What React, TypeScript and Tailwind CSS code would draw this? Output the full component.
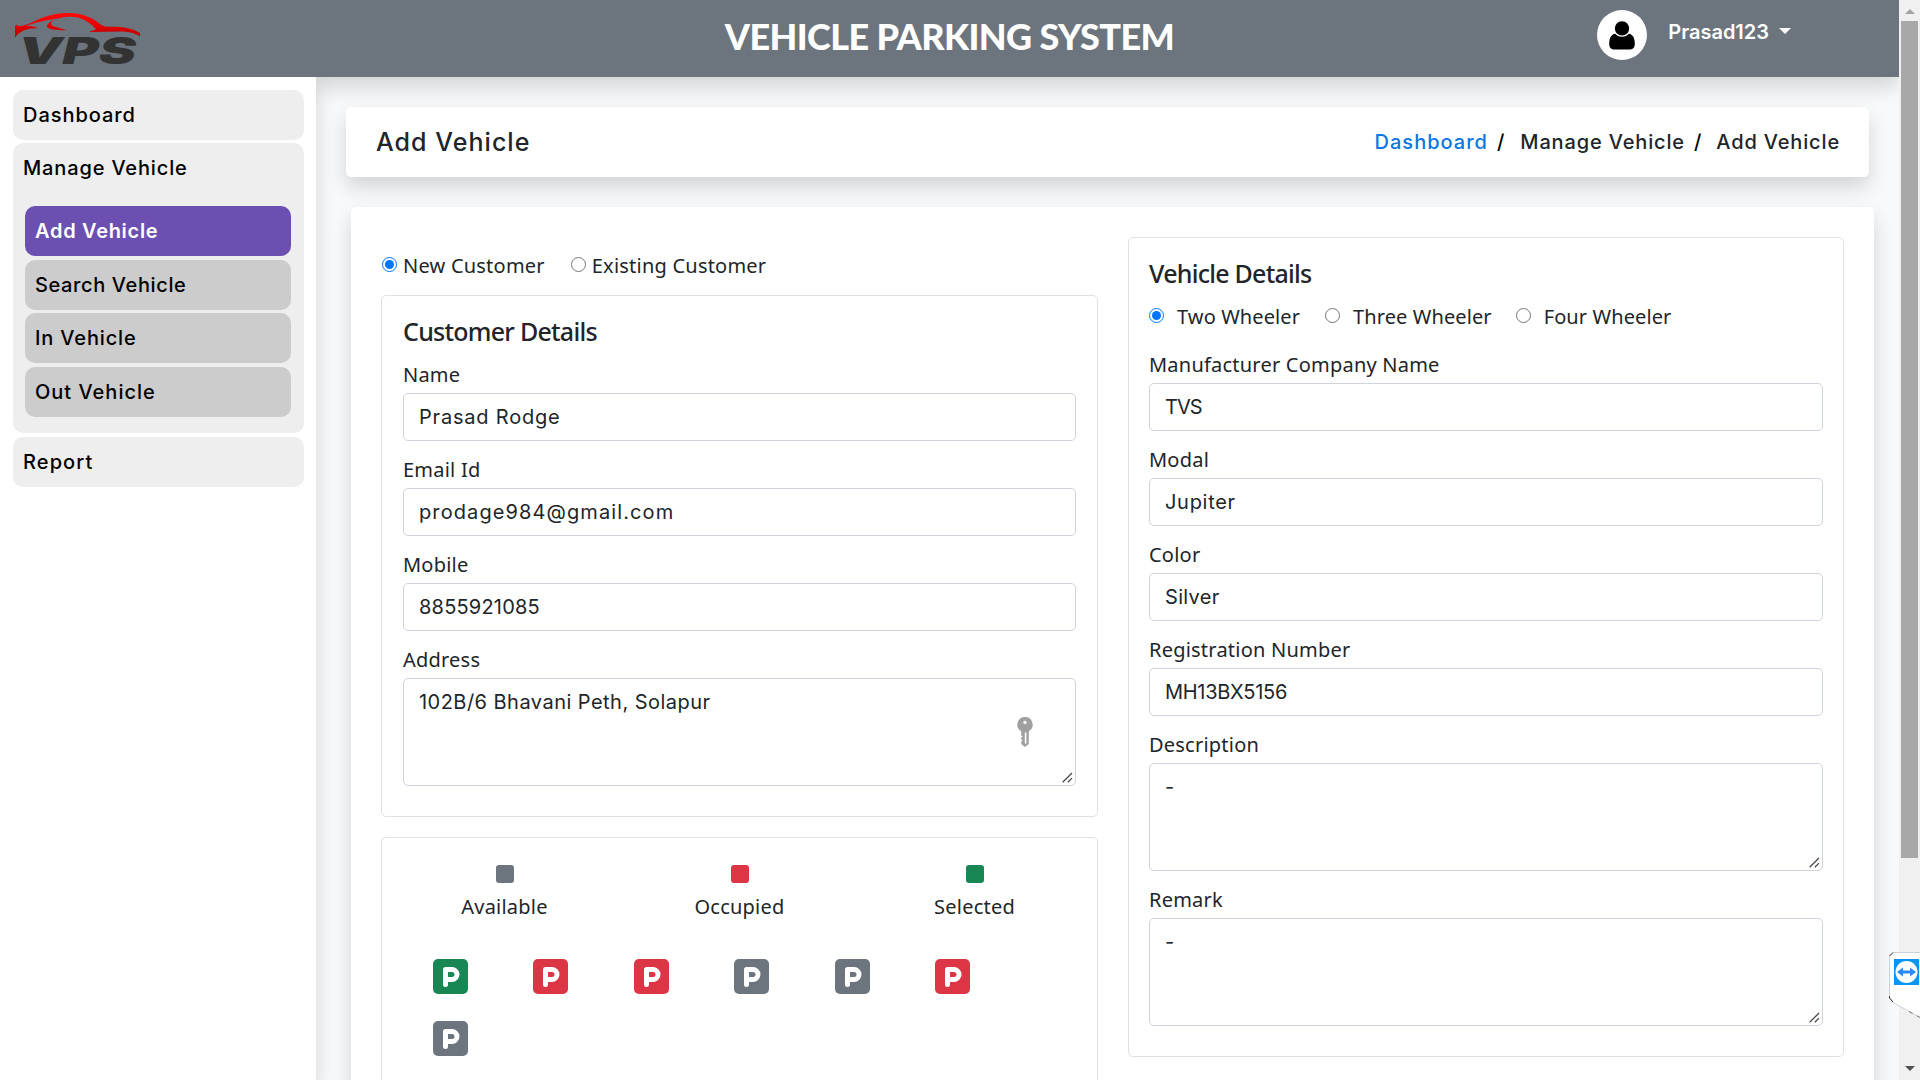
import React from "react";

const SHADOW = "shadow-[0_10px_20px_rgba(0,0,0,0.15)]";

function Logo() {
  return (
    <svg width="140" height="64" viewBox="0 0 140 64" className="block">
      <defs>
        <linearGradient id="car" x1="0" y1="0" x2="0" y2="1">
          <stop offset="0" stopColor="#ff0a0a" />
          <stop offset="0.55" stopColor="#e30000" />
          <stop offset="1" stopColor="#b00000" />
        </linearGradient>
      </defs>
      <path
        fill="url(#car)"
        fillRule="evenodd"
        d="M1 25.500 L1 14 L2.500 12.500 L4 14.300 C10 14 15 12 22 8.500 C32 3.500 43 1 54 1 C66 1 75 4.500 82 9 C86 12 88 14.500 94 14.800 C108 14.500 118 16 126 21 L126 24.500 C119 20.500 114 19.600 106 19.600 L75 20 C78 18.500 80 18 82 17.500 C79 13 71 7.500 64 5.500 C56 3.800 45 5 39 8.800 C35.500 11.500 37 13.500 41 14.800 L53 18.200 C46 18.600 34 17.600 33 15 C32.500 12 36 9.500 43 6.800 C32 8 20 11 12 13.800 C15 14.200 20 14 24 16.200 C14 15.800 6 18.500 1 25.500 Z"
      />
      <text
        x="4"
        y="51.500"
        fontFamily="Inter"
        fontWeight="900"
        fontStyle="italic"
        fontSize="36.5"
        fill="#333333"
        textLength="118"
        lengthAdjust="spacingAndGlyphs"
      >
        VPS
      </text>
    </svg>
  );
}

function Avatar() {
  return (
    <span className="flex size-[50px] items-center justify-center rounded-full bg-white">
      <svg width="26" height="29" viewBox="0 0 26 29">
        <path d="M13 .2c4 0 7.1 3.2 7.1 7.2S17 14.4 13 14.4 5.9 11.400 5.900 7.400 9 .200 13 .2Z" />
        <path d="M6.200 12.800c1.600 1.900 4 3 6.800 3s5.200-1.100 6.800-3c4 .3 6 4.600 6 10.200 0 3.400-1.800 5.400-4.400 5.400H4.600C2 28.400.2 26.400.2 23c0-5.600 2-9.900 6-10.200Z" />
      </svg>
    </span>
  );
}

function Header() {
  return (
    <header className={`relative z-10 grid h-[77px] shrink-0 grid-cols-[1fr_auto_1fr] bg-[#6c757d] ${SHADOW}`}>
      <div className="pt-3 pl-3.5">
        <Logo />
      </div>
      <h1 className="pt-[10px] font-[Lato] text-[36px] leading-[52px] font-black tracking-[-0.6px] whitespace-nowrap text-white">
        VEHICLE PARKING SYSTEM
      </h1>
      <div className="flex justify-end pt-2.5 pr-[108px]">
        <Avatar />
        <span className="ml-[21px] pt-[7px] text-xl leading-[30px] font-semibold text-white">Prasad123</span>
        <svg width="12" height="6" viewBox="0 0 12 6" className="mt-[18px] ml-2.5">
          <path fill="#fff" d="M0 0h12L6 6Z" />
        </svg>
      </div>
    </header>
  );
}

function Sidebar() {
  const subs = [
    { label: "Add Vehicle", cls: "bg-[#6b50b1] text-white font-semibold tracking-[0.7px] mb-1" },
    { label: "Search Vehicle", cls: "bg-[#cccccc] tracking-[0.62px] mb-[3px]" },
    { label: "In Vehicle", cls: "bg-[#cccccc] tracking-[0.85px] mb-1" },
    { label: "Out Vehicle", cls: "bg-[#cccccc] tracking-[1px]" },
  ];
  return (
    <aside className="relative z-20 w-[316px] shrink-0 bg-white px-[13px] pt-[13px] text-xl leading-[50px] font-medium text-black shadow-[0_10px_20px_rgba(0,0,0,0.15)] [clip-path:inset(0_-40px_0_0)]">
      <div className="mb-[3px] h-[50px] w-[291px] rounded-[10px] bg-[#eeeeee] pl-2.5 tracking-[0.95px]">Dashboard</div>
      <div className="mb-1 h-[290px] w-[291px] rounded-[10px] bg-[#eeeeee]">
        <div className="h-[63px] pl-2.5 tracking-[0.85px]">Manage Vehicle</div>
        {subs.map((s) => (
          <div key={s.label} className={`ml-3 h-[50px] w-[266px] rounded-[10px] pl-2.5 ${s.cls}`}>
            {s.label}
          </div>
        ))}
      </div>
      <div className="h-[50px] w-[291px] rounded-[10px] bg-[#eeeeee] pl-2.5 tracking-[1.1px]">Report</div>
    </aside>
  );
}

function Radio({ on }: { on?: boolean }) {
  return (
    <span
      className={`flex size-[15px] shrink-0 items-center justify-center rounded-full border ${on ? "border-[#0075ff]" : "border-[#767676]"}`}
    >
      {on && <span className="size-[9px] rounded-full bg-[#0075ff]" />}
    </span>
  );
}

function Option({ label, on, gap, className = "" }: { label: string; on?: boolean; gap: string; className?: string }) {
  return (
    <div className={`flex h-[30px] items-center ${className}`}>
      <div className="-mt-1">
        <Radio on={on} />
      </div>
      <span className={`leading-[30px] whitespace-nowrap ${gap}`}>{label}</span>
    </div>
  );
}

const FIELD = "block w-full rounded-[5px] border border-[#ced4da] bg-white px-[15px] font-[Inter] text-xl leading-[30px] font-normal text-[#212529]";

function Field({ label, value, tracking }: { label: string; value: string; tracking: string }) {
  return (
    <label className="mb-[14px] block">
      <span className="mb-[3px] block leading-[30px]">{label}</span>
      <input className={`h-12 ${FIELD} ${tracking}`} defaultValue={value} />
    </label>
  );
}

function Area({ label, value, tracking, withKey }: { label: string; value: string; tracking: string; withKey?: boolean }) {
  return (
    <label className="relative mb-[14px] block">
      <span className="mb-[3px] block leading-[30px]">{label}</span>
      <textarea className={`h-[108px] resize-none py-2 ${FIELD} ${tracking}`} defaultValue={value} />
      <svg width="11" height="11" viewBox="0 0 11 11" className="absolute right-[3px] bottom-[3px]" stroke="#4a4a4a" strokeWidth="1.300">
        <path d="M.7 10.300 10 1M5.800 10.300 10 6.100" fill="none" />
      </svg>
      {withKey && (
        <svg width="16" height="30" viewBox="0 0 16 30" className="absolute right-[43px] bottom-[39px]">
          <path
            fill="#a0a0a0"
            fillRule="evenodd"
            d="M8 0a7.600 7.600 0 0 1 3.800 14.200V27L8 30l-3.800-3v-2.400l1.500-1-1.500-1v-2l1.500-1-1.500-1V14.200A7.600 7.600 0 0 1 8 0Zm0 3.800a1.700 1.700 0 1 0 0 3.400 1.700 1.700 0 0 0 0-3.400ZM7.800 15.400v11h1.600v-11Z"
          />
        </svg>
      )}
    </label>
  );
}

function Slot({ color }: { color: string }) {
  return (
    <div className={`flex h-[35px] w-[35px] items-center justify-center rounded-[5px] ${color}`}>
      <svg width="17" height="20" viewBox="0 0 17 20" className="ml-[2px]" fill="none" stroke="#fff" strokeWidth="5" strokeLinecap="round" strokeLinejoin="round">
        <path d="M2.500 17.500V2.500h6.500a5 5 0 0 1 0 10H3" />
      </svg>
    </div>
  );
}

function ParkingBox() {
  const legend = [
    { label: "Available", color: "bg-[#6c757d]" },
    { label: "Occupied", color: "bg-[#dc3545]" },
    { label: "Selected", color: "bg-[#198754]" },
  ];
  const slots = [
    "bg-[#198754]",
    "bg-[#dc3545]",
    "bg-[#dc3545]",
    "bg-[#6c757d]",
    "bg-[#6c757d]",
    "bg-[#dc3545]",
    "bg-[#6c757d]",
  ];
  return (
    <div className="h-[400px] rounded-[5px] border border-[#dee2e6] px-[5px] pt-[27px]">
      <div className="grid grid-cols-3">
        {legend.map((l) => (
          <div key={l.label} className="flex flex-col items-center">
            <span className={`h-[18px] w-[18px] rounded-[3px] ${l.color}`} />
            <span className="mt-[9px] leading-[30px]">{l.label}</span>
          </div>
        ))}
      </div>
      <div className="mt-[37px] ml-[46px] grid grid-cols-[repeat(6,100.4px)] gap-y-[27px]">
        {slots.map((c, i) => (
          <Slot key={i} color={c} />
        ))}
      </div>
    </div>
  );
}

const HEADING = "font-['Noto_Sans'] text-[25px] leading-[30px] font-medium tracking-[-0.75px]";

function Content() {
  return (
    <main className="min-w-0 flex-1 overflow-hidden bg-[#f8f9fa]">
      <div className={`mt-[30px] ml-[30px] flex h-[70px] w-[1523px] items-center justify-between rounded-[5px] bg-white pr-[29px] pl-[30px] ${SHADOW}`}>
        <h2 className="text-[25px] leading-[30px] font-medium tracking-[1.05px]">Add Vehicle</h2>
        <nav className="flex text-xl leading-[30px] font-medium text-[#212529]">
          <a className="tracking-[1px] text-[#0a78de]">Dashboard</a>
          <span className="mr-4 ml-[9px] text-black">/</span>
          <span className="tracking-[0.85px]">Manage Vehicle</span>
          <span className="mr-[15px] ml-[9px] text-black">/</span>
          <span className="tracking-[0.85px]">Add Vehicle</span>
        </nav>
      </div>
      <div className={`mt-[30px] ml-[35px] flex h-[1100px] w-[1523px] items-start gap-[30px] rounded-[5px] bg-white px-[30px] pt-[30px] font-['Noto_Sans'] text-xl tracking-[0.22px] ${SHADOW}`}>
        <section className="w-[717px]">
          <div className="mt-[14px] mb-[14px] ml-px flex">
            <Option label="New Customer" on gap="ml-[6px]" />
            <Option label="Existing Customer" gap="ml-[6px]" className="ml-[26px]" />
          </div>
          <div className="mb-5 h-[522px] rounded-[5px] border border-[#dee2e6] px-[21px] pt-5">
            <h3 className={`mb-[14px] ${HEADING}`}>Customer Details</h3>
            <Field label="Name" value="Prasad Rodge" tracking="tracking-[0.8px]" />
            <Field label="Email Id" value="prodage984@gmail.com" tracking="tracking-[1.1px]" />
            <Field label="Mobile" value="8855921085" tracking="tracking-[0.2px]" />
            <Area label="Address" value="102B/6 Bhavani Peth, Solapur" tracking="tracking-[0.47px]" withKey />
          </div>
          <ParkingBox />
        </section>
        <section className="h-[820px] w-[716px] rounded-[5px] border border-[#dee2e6] px-5 pt-5">
          <h3 className={`mb-[14px] ${HEADING}`}>Vehicle Details</h3>
          <div className="mb-[18px] flex tracking-[0.1px]">
            <Option label="Two Wheeler" on gap="ml-[13px]" />
            <Option label="Three Wheeler" gap="ml-[13px]" className="ml-[25px]" />
            <Option label="Four Wheeler" gap="ml-[13px]" className="ml-[24px]" />
          </div>
          <Field label="Manufacturer Company Name" value="TVS" tracking="tracking-[-1px]" />
          <Field label="Modal" value="Jupiter" tracking="tracking-[0.7px]" />
          <Field label="Color" value="Silver" tracking="tracking-[0.3px]" />
          <Field label="Registration Number" value="MH13BX5156" tracking="tracking-[-0.3px]" />
          <Area label="Description" value="-" tracking="tracking-normal" />
          <Area label="Remark" value="-" tracking="tracking-normal" />
        </section>
      </div>
    </main>
  );
}

function Scrollbar() {
  return (
    <div className="flex w-[21px] shrink-0 flex-col items-center bg-[#f0f0f0]">
      <svg width="10" height="5" viewBox="0 0 10 5" className="mt-[9px]">
        <path fill="#a3a3a3" d="M0 5h10L5 0Z" />
      </svg>
      <div className="mt-[7px] h-[837px] w-[17px] bg-[#a8a8a8]" />
      <svg width="10" height="5" viewBox="0 0 10 5" className="mt-auto mb-[9px]">
        <path fill="#505050" d="M0 0h10L5 5Z" />
      </svg>
    </div>
  );
}

function RemoteTab() {
  return (
    <svg width="31" height="68" viewBox="0 0 31 68" className="absolute top-[952px] right-0 z-30">
      <path fill="#fff" stroke="#c9d1d9" strokeWidth="1" d="M32 .5H4L.5 4V46L4 50.500 32 66Z" />
      <path fill="none" stroke="#333" strokeWidth="1" d="M.5 4 4 .5M.5 44V46L4 50" />
      <path fill="none" stroke="#777" strokeWidth="1" strokeDasharray="4 5" d="M20 59.500 32 66" />
      <rect x="5" y="7" width="25" height="26" fill="#0a95f5" />
      <circle cx="17.500" cy="20" r="11" fill="#fff" />
      <path fill="#2b8af0" d="M8 20l6-4.500v3h7v-3l6 4.500-6 4.500v-3h-7v3Z" />
    </svg>
  );
}

export default function App() {
  return (
    <div className="relative flex h-[1080px] w-[1920px] overflow-hidden bg-[#f8f9fa] font-[Inter] text-[#212529]">
      <div className="flex min-w-0 flex-1 flex-col overflow-hidden">
        <Header />
        <div className="flex min-h-0 flex-1">
          <Sidebar />
          <Content />
        </div>
      </div>
      <Scrollbar />
      <RemoteTab />
    </div>
  );
}
